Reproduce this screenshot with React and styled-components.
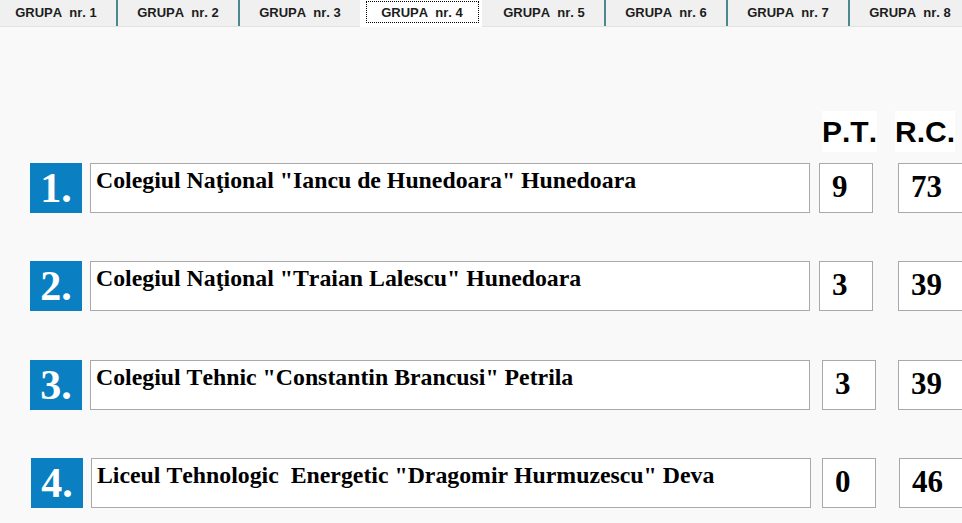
import React from "react";
import styled, { createGlobalStyle } from "styled-components";

const Global = createGlobalStyle`
  html, body {
    margin: 0;
    padding: 0;
    background: #f9f9f9;
    overflow: hidden;
  }
  body {
    font-family: "Liberation Sans", Arial, sans-serif;
    font-kerning: none;
  }
`;

const Page = styled.div`
  width: 962px;
  height: 523px;
  overflow: hidden;
`;

const TabBar = styled.div`
  display: flex;
  height: 26px;
  margin-left: -6px;
  background: #f0f0f0;
  border-bottom: 1px solid #e2e2e2;
`;

const Tab = styled.div`
  flex: 0 0 auto;
  box-sizing: border-box;
  width: 122px;
  height: ${(p) => (p.$active ? "27px" : "26px")};
  border-left: 2px solid ${(p) => (p.$sep ? "#4a8a8e" : "transparent")};
  background: ${(p) => (p.$active ? "#ffffff" : "#f0f0f0")};
  display: flex;
  justify-content: center;
  align-items: flex-start;
  padding-top: ${(p) => (p.$active ? "1px" : "5px")};
`;

const TabLabel = styled.span`
  display: block;
  box-sizing: border-box;
  font-size: 13px;
  font-weight: bold;
  color: #1c1c1c;
  white-space: pre;
  line-height: 15px;
  text-align: center;
  ${(p) =>
    p.$active
      ? `
    width: 113px;
    padding: 3px 0 2px;
    border: 1px dotted #000;
  `
      : ""}
`;

const Content = styled.div`
  padding: 84px 0 0 30px;
`;

const HeaderRow = styled.div`
  display: flex;
  gap: 18px;
  padding-left: 792px;
  margin-bottom: 11px;
`;

const HeaderLabel = styled.span`
  display: block;
  background: #ffffff;
  font-family: "Liberation Sans", Arial, sans-serif;
  font-weight: bold;
  font-size: 30px;
  line-height: 41px;
  color: #000;
  white-space: nowrap;
`;

const List = styled.div`
  display: flex;
  flex-direction: column;
  gap: 48.4px;
`;

const Row = styled.div`
  display: flex;
  height: 50px;
  padding-left: ${(p) => p.$shift || 0}px;
`;

const Rank = styled.div`
  flex: 0 0 52px;
  height: 50px;
  background: #0a7fc1;
  color: #ffffff;
  font-family: "Liberation Serif", "Times New Roman", serif;
  font-weight: bold;
  font-size: 42px;
  line-height: 50px;
  text-align: center;
`;

const Field = styled.div`
  box-sizing: border-box;
  height: 50px;
  background: #ffffff;
  border: 1px solid #a9a9a9;
  color: #000;
  font-family: "Liberation Serif", "Times New Roman", serif;
  font-weight: bold;
  white-space: pre;
  overflow: hidden;
`;

const NameField = styled(Field)`
  flex: 0 0 720px;
  margin-left: 8px;
  font-size: 23.8px;
  padding: 3px 5px 0;
`;

const ScoreField = styled(Field)`
  flex: 0 0 ${(p) => p.$w}px;
  margin-left: ${(p) => p.$gap}px;
  font-size: 31px;
  padding: 5px 12px;
  line-height: normal;
`;

const tabs = [1, 2, 3, 4, 5, 6, 7, 8];
const ACTIVE = 4;

const rows = [
  { n: 1, name: 'Colegiul Naţional "Iancu de Hunedoara" Hunedoara', pt: "9", rc: "73", shift: 0, ptGap: 9 },
  { n: 2, name: 'Colegiul Naţional "Traian Lalescu" Hunedoara', pt: "3", rc: "39", shift: 0, ptGap: 9 },
  { n: 3, name: 'Colegiul Tehnic "Constantin Brancusi" Petrila', pt: "3", rc: "39", shift: 0, ptGap: 12 },
  { n: 4, name: 'Liceul Tehnologic  Energetic "Dragomir Hurmuzescu" Deva', pt: "0", rc: "46", shift: 1, ptGap: 11 },
];

export default function App() {
  return (
    <Page>
      <Global />
      <TabBar>
        {tabs.map((t) => (
          <Tab
            key={t}
            $active={t === ACTIVE}
            $sep={t !== 1 && t !== ACTIVE && t - 1 !== ACTIVE}
          >
            <TabLabel $active={t === ACTIVE}>{`GRUPA\u00a0 nr. ${t}`}</TabLabel>
          </Tab>
        ))}
      </TabBar>
      <Content>
        <HeaderRow>
          <HeaderLabel>P.T.</HeaderLabel>
          <HeaderLabel>R.C.</HeaderLabel>
        </HeaderRow>
        <List>
          {rows.map((r) => (
            <Row key={r.n} $shift={r.shift}>
              <Rank>{r.n}.</Rank>
              <NameField>{r.name}</NameField>
              <ScoreField $w={54} $gap={r.ptGap}>{r.pt}</ScoreField>
              <ScoreField $w={80} $gap={25 - (r.ptGap - 9)}>{r.rc}</ScoreField>
            </Row>
          ))}
        </List>
      </Content>
    </Page>
  );
}
